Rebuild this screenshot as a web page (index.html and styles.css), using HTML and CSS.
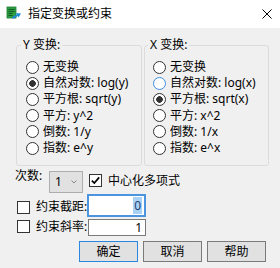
FILE: index.html
```html
<!DOCTYPE html>
<html lang="zh-CN">
<head>
    <meta charset="UTF-8">
    <title>指定变换或约束</title>
    <link rel="stylesheet" href="styles.css">
</head>
<body>
    <div class="titlebar">
        <svg class="app-icon" viewBox="0 0 16 16">
            <rect x="1" y="1" width="9" height="11" fill="#2e9e44"/>
            <rect x="1" y="1" width="9" height="11" fill="none" stroke="#1d7a30" stroke-width="0.8"/>
            <path d="M2.5 3.5h6M2.5 5.5h6M2.5 7.5h4M2.5 9.5h4" stroke="#0f5a1f" stroke-width="1"/>
            <path d="M6 11 L11 8.5 L10 7 L15 7.5 L12.5 11.5 L11.8 10 L7 13 Z" fill="#1e88d8"/>
        </svg>
        <span class="title">指定变换或约束</span>
        <svg class="close" viewBox="0 0 10 10">
            <path d="M0.5 0.5 L9.5 9.5 M9.5 0.5 L0.5 9.5" stroke="#000" stroke-width="1"/>
        </svg>
    </div>

    <div class="dialog">
        <div class="groups">
            <fieldset class="group group-y">
                <legend>Y 变换:</legend>
                <div class="option"><span class="radio"></span>无变换</div>
                <div class="option"><span class="radio on"></span>自然对数: log(y)</div>
                <div class="option"><span class="radio"></span>平方根: sqrt(y)</div>
                <div class="option"><span class="radio"></span>平方: y^2</div>
                <div class="option"><span class="radio"></span>倒数: 1/y</div>
                <div class="option"><span class="radio"></span>指数: e^y</div>
            </fieldset>
            <fieldset class="group group-x">
                <legend>X 变换:</legend>
                <div class="option"><span class="radio"></span>无变换</div>
                <div class="option"><span class="radio hover"></span>自然对数: log(x)</div>
                <div class="option"><span class="radio on"></span>平方根: sqrt(x)</div>
                <div class="option"><span class="radio"></span>平方: x^2</div>
                <div class="option"><span class="radio"></span>倒数: 1/x</div>
                <div class="option"><span class="radio"></span>指数: e^x</div>
            </fieldset>
        </div>

        <div class="degree-row">
            <span class="degree-label">次数:</span>
            <div class="combo">
                <span>1</span>
                <svg class="chevron" viewBox="0 0 6 4"><path d="M0.5 0.5 L3 3 L5.5 0.5" fill="none" stroke="#888" stroke-width="1"/></svg>
            </div>
            <div class="check-line">
                <span class="box">
                    <svg viewBox="0 0 11 11"><path d="M1.8 5.6 L4.3 8.1 L9.2 2.4" fill="none" stroke="#000" stroke-width="1.7"/></svg>
                </span>
                中心化多项式
            </div>
        </div>

        <div class="constraint-row first">
            <span class="box"></span>
            <span class="c-label">约束截距:</span>
            <div class="field focused"><span class="selected">0</span></div>
        </div>
        <div class="constraint-row second">
            <span class="box"></span>
            <span class="c-label">约束斜率:</span>
            <div class="field">1</div>
        </div>

        <div class="buttons">
            <button class="btn default">确定</button>
            <button class="btn">取消</button>
            <button class="btn">帮助</button>
        </div>
    </div>
</body>
</html>
```

FILE: styles.css
```css
* {
    box-sizing: border-box;
}
html, body {
    margin: 0;
}
body {
    width: 280px;
    height: 268px;
    overflow: hidden;
    background: #f0f0f0;
    color: #000;
    font-family: "Noto Sans", "Noto Sans CJK SC", sans-serif;
    font-size: 12px;
    line-height: 14px;
}

.titlebar {
    height: 28px;
    background: #fff;
    display: flex;
    align-items: center;
    padding: 0 8px 0 6px;
}
.app-icon {
    width: 16px;
    height: 16px;
    margin-right: 6px;
}
.title {
    flex: 1;
}
.close {
    width: 10px;
    height: 10px;
}

.dialog {
    padding: 10px 11px 0 15px;
}
.groups {
    display: flex;
    gap: 2px;
    margin-left: 1px;
}
.group {
    margin: 0;
    min-width: 0;
    border: 1px solid #dcdcdc;
    border-radius: 3px;
    padding: 7px 0 9px 9px;
}
.group-y {
    width: 126px;
}
.group-x {
    width: 125px;
    padding-left: 8px;
}
.group legend {
    margin-left: -5px;
    padding: 0 2px;
    line-height: 14px;
}
.option {
    display: flex;
    align-items: center;
    height: 16.2px;
    white-space: nowrap;
}
.radio {
    flex: none;
    width: 13px;
    height: 13px;
    border: 1px solid #333;
    border-radius: 50%;
    background: #fff;
    margin-right: 4px;
}
.radio.on {
    background: radial-gradient(circle, #333 0 3px, #fff 3.6px);
}
.radio.hover {
    border-color: #3d8ee0;
}

.degree-row {
    display: flex;
    align-items: flex-start;
    height: 22px;
    margin-top: 5px;
}
.degree-label {
    width: 34px;
    margin-top: -2px;
}
.combo {
    width: 34px;
    height: 22px;
    display: flex;
    align-items: center;
    padding: 0 5px;
    background: #e1e1e1;
    border: 1px solid #adadad;
}
.chevron {
    width: 6px;
    height: 4px;
    margin-left: auto;
}
.check-line {
    display: flex;
    align-items: center;
    height: 13px;
    margin: 3px 0 0 6px;
}
.box {
    flex: none;
    width: 13px;
    height: 13px;
    border: 1px solid #333;
    background: #fff;
    margin-right: 6px;
}
.box svg {
    display: block;
    width: 11px;
    height: 11px;
}

.constraint-row {
    display: flex;
    align-items: flex-start;
    padding-left: 2px;
}
.constraint-row.first {
    margin-top: 1px;
    height: 23px;
}
.constraint-row.second {
    height: 19px;
}
.first .box {
    margin-top: 7px;
}
.first .c-label {
    margin-top: 6px;
}
.second .box {
    margin-top: 3px;
}
.second .c-label {
    margin-top: 3px;
}
.c-label {
    width: 51px;
    white-space: nowrap;
}
.field {
    width: 58px;
    height: 17px;
    margin: 2px 0 0 1px;
    background: #fff;
    border: 1px solid #7a7a7a;
    text-align: right;
    padding-right: 3px;
    line-height: 15px;
}
.field.focused {
    width: 59px;
    height: 23px;
    margin: 0;
    border: 2px solid #4a94e0;
    line-height: 19px;
    padding-right: 2px;
}
.selected {
    background: #a9d1f5;
    color: #1d3f6e;
    padding: 0 1px;
}

.buttons {
    display: flex;
    justify-content: flex-end;
    gap: 5px;
    margin-top: 5px;
    padding-right: 3px;
}
.btn {
    width: 59px;
    height: 21px;
    padding: 0;
    font: inherit;
    color: #000;
    background: #e1e1e1;
    border: 1px solid #7a7a7a;
}
.btn.default {
    border-color: #2b86df;
}
```
